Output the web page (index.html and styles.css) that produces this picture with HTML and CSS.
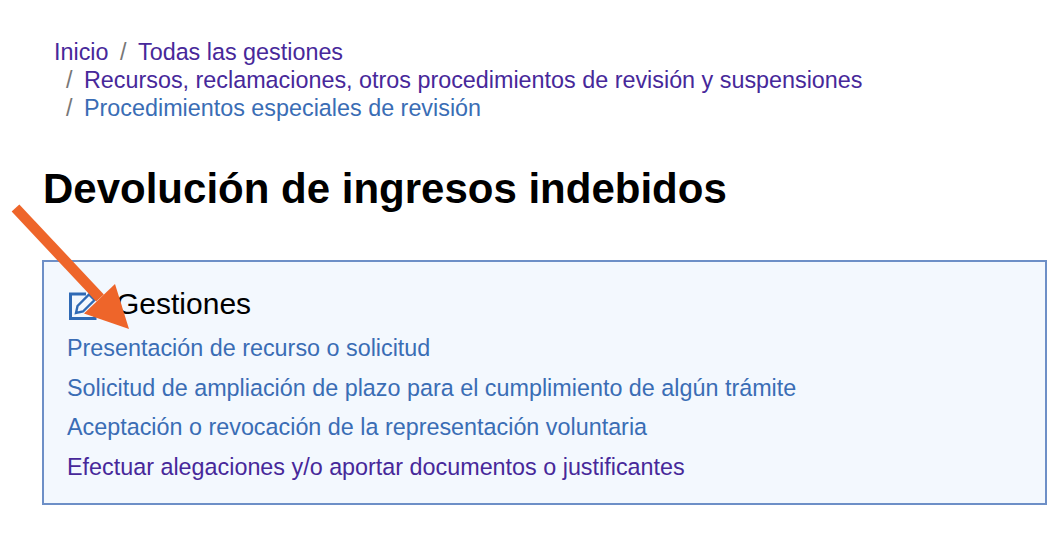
FILE: index.html
```html
<!DOCTYPE html>
<html lang="es">
<head>
<meta charset="utf-8">
<title>Devolución de ingresos indebidos</title>
<link rel="stylesheet" href="styles.css">
</head>
<body>
<main class="page">
  <nav class="crumbs">
    <div class="crumb-line first"><a class="visited">Inicio</a><span class="sep">/</span><a class="visited">Todas las gestiones</a></div>
    <div class="crumb-line"><span class="sep lead">/</span><a class="visited">Recursos, reclamaciones, otros procedimientos de revisión y suspensiones</a></div>
    <div class="crumb-line"><span class="sep lead">/</span><a class="link">Procedimientos especiales de revisión</a></div>
  </nav>
  <h1 class="title">Devolución de ingresos indebidos</h1>
  <section class="box">
    <h2 class="box-title">
      <svg class="edit-icon" viewBox="0 0 28 28" width="28" height="28" aria-hidden="true">
        <path d="M17 2H1.500v24.500H26V13" fill="none" stroke="#2f6ab5" stroke-width="3"/>
        <path d="M7 21l1.500-7L20 2.500l5.500 5.500L14 19.500z" fill="#f3f8fe" stroke="#2f6ab5" stroke-width="2.400"/>
      </svg>
      <span>Gestiones</span>
    </h2>
    <ul class="list">
      <li><a class="link">Presentación de recurso o solicitud</a></li>
      <li><a class="link">Solicitud de ampliación de plazo para el cumplimiento de algún trámite</a></li>
      <li><a class="link">Aceptación o revocación de la representación voluntaria</a></li>
      <li><a class="visited">Efectuar alegaciones y/o aportar documentos o justificantes</a></li>
    </ul>
  </section>
  <svg class="arrow" viewBox="0 0 140 340" width="140" height="340" aria-hidden="true">
    <path d="M15.500 208L100 298" fill="none" stroke="#ee652a" stroke-width="10.500"/>
    <path d="M115 284L129 329L84 313.500Z" fill="#ee652a"/>
  </svg>
</main>
</body>
</html>
```

FILE: styles.css
```css
* { box-sizing: border-box; }
html, body { margin: 0; padding: 0; background: #fff; }
body { font-family: "Liberation Sans", Arial, sans-serif; overflow: hidden; }
.page { position: relative; width: 1064px; height: 549px; padding: 38px 17px 0 42px; }
.crumbs { padding-left: 12px; font-size: 23.350px; line-height: 28px; }
.crumb-line { padding-left: 12px; white-space: nowrap; }
.crumb-line.first { padding-left: 0; }
.sep { color: #777; margin: 0 11.500px; }
.sep.lead { margin: 0 11.500px 0 0; }
.visited { color: #47289a; }
.link { color: #3a6db5; }
.title { margin: 41px 0 0 1px; font-size: 42px; line-height: 52px; font-weight: 700; color: #000; }
.box { margin-top: 45px; height: 245px; border: 2px solid #6d8fc7; background: #f3f8fe; padding: 25px 23px 0; }
.box-title { display: flex; align-items: center; margin: 0; font-size: 30px; line-height: 34px; font-weight: 400; color: #000; }
.edit-icon { margin: 0 19px 0 2px; flex: none; position: relative; top: 2px; }
.list { list-style: none; margin: 8px 0 0; padding: 0; font-size: 23.350px; line-height: 39.500px; }
.arrow { position: absolute; left: 0; top: 0; }
```
